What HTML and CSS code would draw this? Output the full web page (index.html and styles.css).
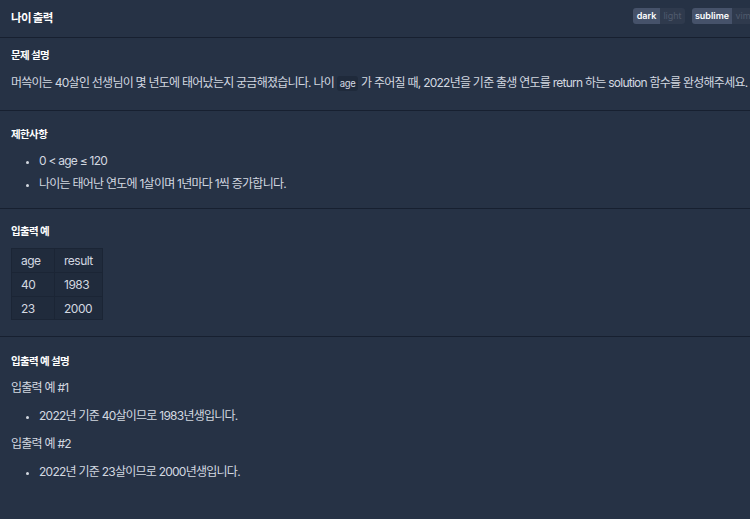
FILE: index.html
```html
<!DOCTYPE html>
<html lang="ko">
<head>
<meta charset="utf-8">
<link rel="stylesheet" href="styles.css">
</head>
<body>
<div class="page">
  <header class="top">
    <h1 class="title">나이 출력</h1>
    <div class="toggles">
      <div class="seg"><span class="on w-dark">dark</span><span class="off w-light">light</span></div>
      <div class="seg"><span class="on w-sub">sublime</span><span class="off w-vim">vim</span></div>
    </div>
  </header>
  <section class="sec s1">
    <h2 class="h">문제 설명</h2>
    <p class="p">머쓱이는 40살인 선생님이 몇 년도에 태어났는지 궁금해졌습니다. 나이 <code class="code">age</code> 가 주어질 때, 2022년을 기준 출생 연도를 return 하는 solution 함수를 완성해주세요.</p>
  </section>
  <section class="sec s2">
    <h2 class="h">제한사항</h2>
    <ul class="list">
      <li>0 &lt; age ≤ 120</li>
      <li>나이는 태어난 연도에 1살이며 1년마다 1씩 증가합니다.</li>
    </ul>
  </section>
  <section class="sec s3">
    <h2 class="h">입출력 예</h2>
    <table class="tbl">
      <thead><tr><th>age</th><th>result</th></tr></thead>
      <tbody>
        <tr><td>40</td><td>1983</td></tr>
        <tr><td>23</td><td>2000</td></tr>
      </tbody>
    </table>
  </section>
  <section class="sec s4">
    <h2 class="h">입출력 예 설명</h2>
    <p class="p sub">입출력 예 #1</p>
    <ul class="list one">
      <li>2022년 기준 40살이므로 1983년생입니다.</li>
    </ul>
    <p class="p sub">입출력 예 #2</p>
    <ul class="list one">
      <li>2022년 기준 23살이므로 2000년생입니다.</li>
    </ul>
  </section>
</div>
</body>
</html>
```
FILE: styles.css
```css
* { box-sizing: border-box; }
html, body { margin: 0; padding: 0; background: #263245; }
body {
  font-family: Inter, "Noto Sans CJK KR", sans-serif;
  color: #d3d8e0;
  width: 750px;
  height: 519px;
  overflow: hidden;
}
.page { width: 750px; }
.top {
  height: 38px;
  border-bottom: 1px solid #172030;
  display: flex;
  align-items: flex-start;
  justify-content: space-between;
  padding: 0 0 0 11px;
  overflow: hidden;
}
.title {
  margin: 10px 0 0;
  font-size: 11.5px;
  line-height: 16px;
  letter-spacing: -0.7px;
  font-weight: 700;
  color: #ffffff;
}
.toggles {
  display: flex;
  gap: 7px;
  margin-top: 8px;
  margin-right: -4px;
  flex-shrink: 0;
}
.seg {
  display: flex;
  border-radius: 3px;
  overflow: hidden;
  font-size: 9px;
  line-height: 16px;
  height: 16px;
}
.seg span { text-align: center; }
.seg .on { background: #46526a; color: #ffffff; font-weight: 600; }
.seg .off { background: #2f3a4d; color: #4f5a6e; }
.w-dark { width: 27px; }
.w-light { width: 25px; }
.w-sub { width: 40px; }
.w-vim { width: 22px; }
.sec {
  padding: 15px 11px 13px;
  border-bottom: 1px solid #172030;
}
.s1 { padding-top: 10px; padding-bottom: 15px; }
.s2 { padding-top: 16px; padding-bottom: 13px; }
.s3 { padding-top: 15px; padding-bottom: 16px; }
.s4 { padding-top: 17px; border-bottom: none; }
.h {
  margin: 0;
  font-size: 10.5px;
  line-height: 16px;
  letter-spacing: -0.6px;
  font-weight: 700;
  color: #ffffff;
}
.p {
  margin: 8px 0 0;
  font-size: 12px;
  line-height: 22px;
  letter-spacing: -0.75px;
  white-space: nowrap;
}
.code {
  font-family: Inter, sans-serif;
  font-size: 9.5px;
  letter-spacing: -0.3px;
  background: #1f2a3b;
  padding: 2px 3px;
  border-radius: 3px;
  color: #d3d8e0;
}
.list {
  margin: 6px 0 0;
  padding: 0 0 0 28px;
  font-size: 12px;
  line-height: 23px;
  letter-spacing: -0.75px;
}
.list li::marker { font-size: 10px; }
.sub { margin-top: 7px; }
.list.one { margin-top: 6px; line-height: 22px; }
.s4 .list.one + .sub { margin-top: 6px; }
.tbl {
  margin-top: 8px;
  border-collapse: collapse;
  background: #202b3c;
  font-size: 12px;
  letter-spacing: -0.5px;
}
.tbl th, .tbl td {
  border: 1px solid #1b2535;
  padding: 0 9px;
  height: 24px;
  text-align: left;
  font-weight: 400;
  color: #d3d8e0;
}
.tbl tr:last-child td { height: 23px; }
.tbl th:first-child, .tbl td:first-child { width: 43px; }
.tbl th:last-child, .tbl td:last-child { width: 46px; }
```
